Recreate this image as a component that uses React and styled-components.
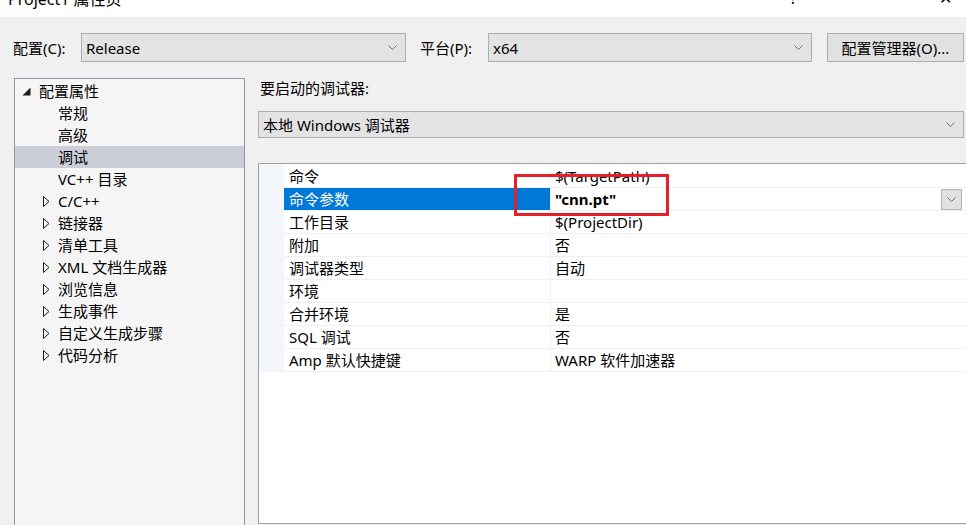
import React from 'react';
import styled, { createGlobalStyle } from 'styled-components';

const GlobalStyle = createGlobalStyle`
  html, body {
    margin: 0;
    padding: 0;
    background: #f0f0f0;
  }
  body {
    font-family: "Noto Sans", "Noto Sans CJK SC", sans-serif;
    font-size: 15px;
    color: #000;
  }
`;

const Page = styled.div`
  position: relative;
  width: 966px;
  height: 525px;
  overflow: hidden;
  display: flex;
  flex-direction: column;
  background: #f0f0f0;
`;

const TitleBar = styled.div`
  height: 17px;
  flex: none;
  background: #fff;
  overflow: hidden;
  display: flex;
  justify-content: space-between;
  padding: 0 14px 0 8px;
  font-size: 16px;
  line-height: 16px;
  color: #000;
`;

const TitleText = styled.div`
  margin-top: -9px;
`;

const TitleControls = styled.div`
  display: flex;
  gap: 142px;
  margin-top: -10px;
`;

const Toolbar = styled.div`
  display: flex;
  align-items: center;
  padding: 16px 0 0 13px;
  height: 29px;
  flex: none;
`;

const FieldLabel = styled.span`
  width: ${p => p.$w}px;
  margin-left: ${p => p.$ml || 0}px;
  flex: none;
  line-height: 20px;
`;

const Select = styled.div`
  box-sizing: border-box;
  width: ${p => p.$w ? `${p.$w}px` : '100%'};
  height: ${p => p.$h || 29}px;
  flex: none;
  display: flex;
  align-items: center;
  justify-content: space-between;
  padding: 0 8px 0 4px;
  background: #e3e3e3;
  border: 1px solid #adadad;
  line-height: 20px;
`;

const Chevron = () => (
  <svg width="9" height="5" viewBox="0 0 9 5">
    <path d="M0.5 0.5 L4.5 4.5 L8.5 0.5" fill="none" stroke="#6d6d6d" strokeWidth="1" />
  </svg>
);

const Button = styled.div`
  box-sizing: border-box;
  width: 137px;
  height: 29px;
  margin-left: 15px;
  flex: none;
  display: flex;
  align-items: center;
  justify-content: center;
  background: #e1e1e1;
  border: 1px solid #adadad;
  line-height: 20px;
`;

const Body = styled.div`
  flex: 1;
  display: flex;
  padding-left: 14px;
  margin-top: 16px;
  min-height: 0;
`;

const Tree = styled.div`
  box-sizing: border-box;
  width: 231px;
  flex: none;
  background: #f5f5f5;
  border: 1px solid #8f93a2;
  border-bottom: none;
  padding-top: 1px;
  margin-bottom: -2px;
`;

const TreeRow = styled.div`
  height: 22px;
  display: flex;
  align-items: center;
  padding-left: ${p => p.$indent}px;
  background: ${p => (p.$selected ? '#cbcdd9' : 'transparent')};
  line-height: 22px;
  white-space: nowrap;
`;

const Toggle = styled.span`
  width: ${p => p.$w}px;
  flex: none;
  display: flex;
  align-items: center;
`;

const Expanded = () => (
  <svg width="9" height="9" viewBox="0 0 9 9">
    <polygon points="8.5,0.5 8.5,8.5 0.5,8.5" fill="#1e1e1e" />
  </svg>
);

const Collapsed = () => (
  <svg width="7" height="11" viewBox="0 0 7 11">
    <polygon points="0.5,0.5 6,5.5 0.5,10.5" fill="none" stroke="#1e1e1e" strokeWidth="1" />
  </svg>
);

const RightColumn = styled.div`
  flex: 1;
  margin-left: 13px;
  padding-right: 2px;
  padding-bottom: 1px;
  display: flex;
  flex-direction: column;
  min-width: 0;
`;

const SectionLabel = styled.div`
  line-height: 20px;
  margin-left: 2px;
`;

const Spacer = styled.div`
  height: ${p => p.$h}px;
  flex: none;
`;

const Grid = styled.div`
  flex: 1;
  margin-right: -6px;
  background: #fff;
  border: 1px solid #a0a0a0;
  border-right: none;
  padding-top: 1px;
`;

const GridRow = styled.div`
  display: grid;
  grid-template-columns: 25px 267px 1fr;
  height: 23px;
`;

const Gutter = styled.div`
  background: #f3f6fa;
`;

const NameCell = styled.div`
  padding-left: 5px;
  line-height: 22px;
  border-bottom: 1px solid #edf0f4;
  border-right: 1px solid #edf0f4;
  background: ${p => (p.$selected ? '#0078d7' : '#fff')};
  color: ${p => (p.$selected ? '#fff' : '#000')};
  white-space: nowrap;
`;

const ValueCell = styled.div`
  display: flex;
  align-items: center;
  justify-content: space-between;
  padding-left: 4px;
  padding-right: 8px;
  line-height: 22px;
  border-bottom: 1px solid #edf0f4;
  font-weight: ${p => (p.$bold ? 700 : 400)};
  white-space: nowrap;
`;

const DropButton = styled.div`
  box-sizing: border-box;
  width: 21px;
  height: 21px;
  display: flex;
  align-items: center;
  justify-content: center;
  background: #e1e1e1;
  border: 1px solid #b4b4b4;
`;

const Highlight = styled.div`
  position: absolute;
  left: 514px;
  top: 174px;
  width: 155px;
  height: 42px;
  box-sizing: border-box;
  border: 3px solid #e5202a;
  pointer-events: none;
`;

const treeItems = [
  { label: '配置属性', indent: 7, toggle: 'open', tw: 17 },
  { label: '常规', indent: 43 },
  { label: '高级', indent: 43 },
  { label: '调试', indent: 43, selected: true },
  { label: 'VC++ 目录', indent: 43 },
  { label: 'C/C++', indent: 28, toggle: 'closed', tw: 15 },
  { label: '链接器', indent: 28, toggle: 'closed', tw: 15 },
  { label: '清单工具', indent: 28, toggle: 'closed', tw: 15 },
  { label: 'XML 文档生成器', indent: 28, toggle: 'closed', tw: 15 },
  { label: '浏览信息', indent: 28, toggle: 'closed', tw: 15 },
  { label: '生成事件', indent: 28, toggle: 'closed', tw: 15 },
  { label: '自定义生成步骤', indent: 28, toggle: 'closed', tw: 15 },
  { label: '代码分析', indent: 28, toggle: 'closed', tw: 15 },
];

const properties = [
  { name: '命令', value: '$(TargetPath)' },
  { name: '命令参数', value: '"cnn.pt"', selected: true },
  { name: '工作目录', value: '$(ProjectDir)' },
  { name: '附加', value: '否' },
  { name: '调试器类型', value: '自动' },
  { name: '环境', value: '' },
  { name: '合并环境', value: '是' },
  { name: 'SQL 调试', value: '否' },
  { name: 'Amp 默认快捷键', value: 'WARP 软件加速器' },
];

const App = () => {
  return (
    <Page>
      <GlobalStyle />
      <TitleBar>
        <TitleText>Project1 属性页</TitleText>
        <TitleControls>
          <span>?</span>
          <span>✕</span>
        </TitleControls>
      </TitleBar>

      <Toolbar>
        <FieldLabel $w={68}>配置(C):</FieldLabel>
        <Select $w={325}>
          <span>Release</span>
          <Chevron />
        </Select>
        <FieldLabel $w={68} $ml={14}>平台(P):</FieldLabel>
        <Select $w={324}>
          <span>x64</span>
          <Chevron />
        </Select>
        <Button>配置管理器(O)...</Button>
      </Toolbar>

      <Body>
        <Tree>
          {treeItems.map(item => (
            <TreeRow key={item.label} $indent={item.indent} $selected={item.selected}>
              {item.toggle && (
                <Toggle $w={item.tw}>
                  {item.toggle === 'open' ? <Expanded /> : <Collapsed />}
                </Toggle>
              )}
              <span>{item.label}</span>
            </TreeRow>
          ))}
        </Tree>

        <RightColumn>
          <SectionLabel>要启动的调试器:</SectionLabel>
          <Spacer $h={13} />
          <Select $h={27}>
            <span>本地 Windows 调试器</span>
            <Chevron />
          </Select>
          <Spacer $h={25} />
          <Grid>
            {properties.map(prop => (
              <GridRow key={prop.name}>
                <Gutter />
                <NameCell $selected={prop.selected}>{prop.name}</NameCell>
                <ValueCell $bold={prop.selected}>
                  <span>{prop.value}</span>
                  {prop.selected && (
                    <DropButton>
                      <Chevron />
                    </DropButton>
                  )}
                </ValueCell>
              </GridRow>
            ))}
          </Grid>
        </RightColumn>
      </Body>

      <Highlight />
    </Page>
  );
};

export default App;
